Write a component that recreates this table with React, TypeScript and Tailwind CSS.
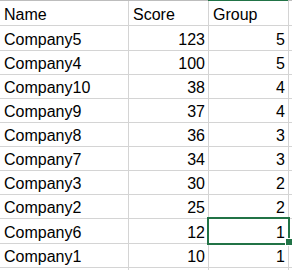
import React from "react";

const rows: [string, string, string][] = [
  ["Company5", "123", "5"],
  ["Company4", "100", "5"],
  ["Company10", "38", "4"],
  ["Company9", "37", "4"],
  ["Company8", "36", "3"],
  ["Company7", "34", "3"],
  ["Company3", "30", "2"],
  ["Company2", "25", "2"],
  ["Company6", "12", "1"],
  ["Company1", "10", "1"],
];

const heights = [25, 25, 24, 24, 24, 24, 24, 24, 24, 25, 24, 24];

export default function App() {
  return (
    <div
      className="relative w-[292px] h-[270px] overflow-hidden bg-white text-[16px] text-[#000]"
      style={{ fontFamily: '"Liberation Sans", Arial, sans-serif' }}
    >
      <div className="flex h-[1px]">
        <div className="w-[208px] bg-[#bdbdbd]" />
        <div className="w-[80px] bg-[#217346]" />
        <div className="flex-1 bg-[#bdbdbd]" />
      </div>
      {[["Name", "Score", "Group"] as [string, string, string], ...rows, ["", "", ""] as [string, string, string]].map(
        (r, i) => {
          const header = i === 0;
          return (
            <div
              key={i}
              className="grid grid-cols-[129px_80px_80px_1fr]"
              style={{ height: heights[i] }}
            >
              <div className="flex items-end pl-[4px] pb-[1px] border-r border-b border-[#d4d4d4] leading-[18px] whitespace-nowrap">
                {r[0]}
              </div>
              <div
                className={`flex items-end ${header ? "justify-start pl-[4px]" : "justify-end pr-[3px]"} pb-[1px] border-r border-b border-[#d4d4d4] leading-[18px]`}
              >
                {r[1]}
              </div>
              <div
                className={`flex items-end ${header ? "justify-start pl-[4px]" : "justify-end pr-[3px]"} pb-[1px] border-r border-b border-[#d4d4d4] leading-[18px]`}
              >
                {r[2]}
              </div>
              <div className="border-b border-[#d4d4d4]" />
            </div>
          );
        }
      )}
      <div className="absolute left-[207px] top-[217px] w-[83px] h-[28px] border-2 border-[#217346]" />
      <div className="absolute left-[285px] top-[238px] w-[8px] h-[8px] bg-[#217346] border border-white" />
    </div>
  );
}
